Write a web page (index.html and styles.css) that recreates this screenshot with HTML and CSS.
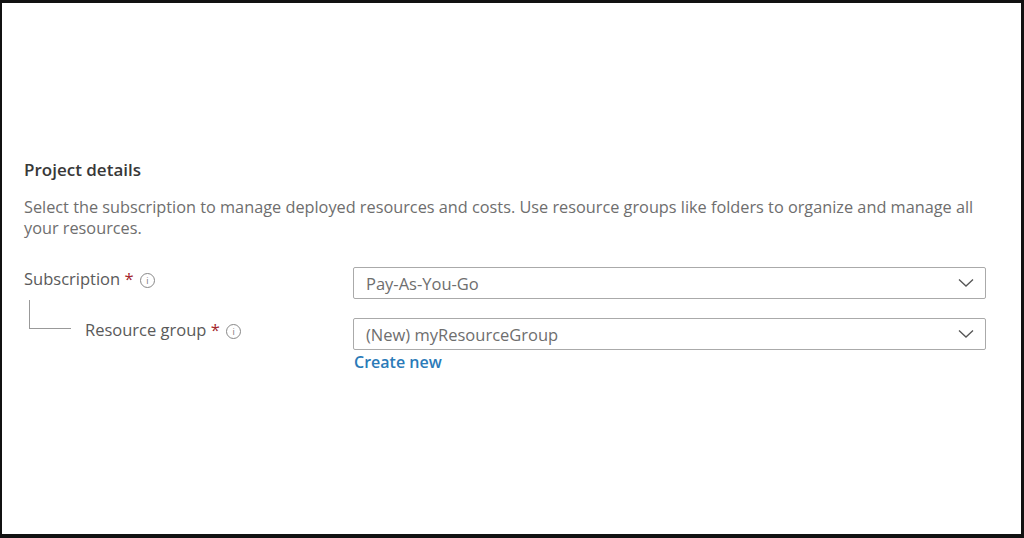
FILE: index.html
```html
<!DOCTYPE html>
<html>
<head>
<meta charset="utf-8">
<link rel="stylesheet" href="styles.css">
</head>
<body>
<div class="frame">
  <section class="section">
    <h2 class="title">Project details</h2>
    <p class="desc">Select the subscription to manage deployed resources and costs. Use resource groups like folders to organize and manage all your resources.</p>
    <div class="row">
      <div class="label">Subscription <span class="req">*</span> <span class="info">i</span></div>
      <div class="field">
        <div class="select"><span>Pay-As-You-Go</span>
          <svg class="chev" width="16" height="10" viewBox="0 0 16 10"><path d="M1 1.5 L8 8 L15 1.5" fill="none" stroke="#555" stroke-width="1.3"/></svg>
        </div>
      </div>
    </div>
    <div class="row row2">
      <div class="label sub"><span class="tree"></span>Resource group <span class="req">*</span> <span class="info">i</span></div>
      <div class="field">
        <div class="select"><span>(New) myResourceGroup</span>
          <svg class="chev" width="16" height="10" viewBox="0 0 16 10"><path d="M1 1.5 L8 8 L15 1.5" fill="none" stroke="#555" stroke-width="1.3"/></svg>
        </div>
        <a class="link">Create new</a>
      </div>
    </div>
  </section>
</div>
</body>
</html>
```

FILE: styles.css
```css
html, body { margin: 0; padding: 0; }
body {
  width: 1024px; height: 538px; background: #fff; overflow: hidden;
  font-family: "Open Sans", "Noto Sans", sans-serif;
}
.frame {
  box-sizing: border-box;
  width: 1024px; height: 538px;
  border-top: 3px solid #111;
  border-left: 2px solid #111;
  border-right: 3px solid #111;
  border-bottom: 4px solid #111;
  background: #fff;
  padding: 155px 0 0 22px;
}
.section { width: 962px; }
.title {
  margin: 0; font-size: 17px; font-weight: 600; color: #383838; line-height: 24px;
}
.desc {
  margin: 15px 0 0 0; font-size: 16.3px; color: #6e6e6e; line-height: 21px;
}
.row { display: flex; margin-top: 28px; }
.row2 { margin-top: 19px; }
.label {
  position: relative;
  width: 329px; font-size: 16.5px; color: #5a5a5a; line-height: 24px;
}
.label.sub { padding-left: 61px; box-sizing: border-box; }
.tree {
  position: absolute; left: 5px; top: -18px; width: 41px; height: 28px;
  border-left: 1px solid #999; border-bottom: 1px solid #999;
}
.req { color: #a4262c; }
.info {
  display: inline-block; width: 13px; height: 13px; border: 1px solid #888; border-radius: 50%;
  font-size: 9px; line-height: 13px; text-align: center; color: #777; vertical-align: 1px; margin-left: 2px;
}
.field { flex: 1; }
.select {
  box-sizing: border-box; height: 32px; border: 1px solid #aaa; border-radius: 2px;
  display: flex; align-items: center; justify-content: space-between;
  padding: 0 11px 0 12px; font-size: 16.5px; color: #6e6e6e;
}
.link { display: block; margin-top: 1px; margin-left: 1px; color: #2a7ab8; font-size: 16px; font-weight: 600; line-height: 22px; }
```
